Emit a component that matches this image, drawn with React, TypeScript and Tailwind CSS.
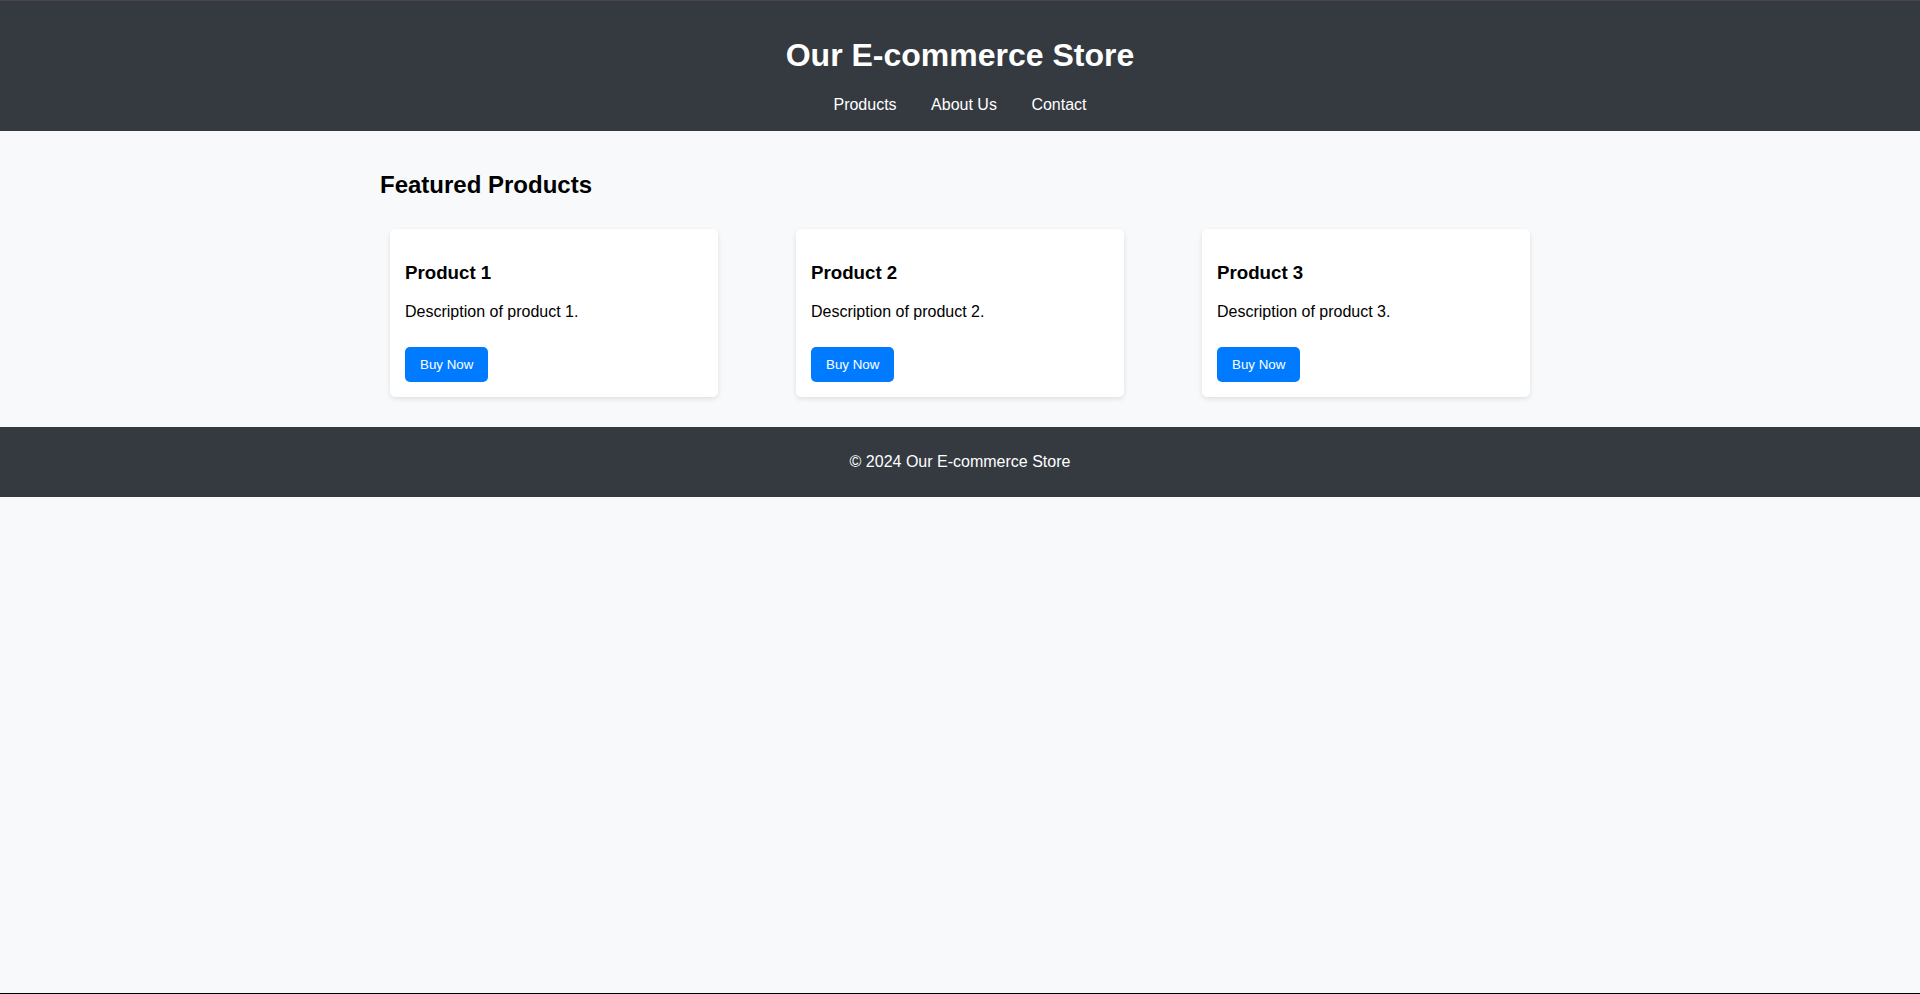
export default function App() {
  const products = [1, 2, 3];
  return (
    <div
      className="min-h-[994px] bg-[#f8f9fa] text-black border-b border-black flex flex-col"
      style={{ fontFamily: '"Liberation Sans", Arial, sans-serif' }}
    >
      <header className="bg-[#343a40] text-white text-center pt-[15px] pb-[17px] border-t border-[#4b4444]">
        <h1 className="text-[32px] leading-[37px] font-bold mt-[21px] mb-[22px]">Our E-commerce Store</h1>
        <nav className="text-[16px] leading-[18px] flex justify-center gap-[34.5px]">
          <a className="text-white">Products</a>
          <a className="text-white">About Us</a>
          <a className="text-white">Contact</a>
        </nav>
      </header>
      <main className="w-[1200px] mx-auto px-[20px] pt-[20px] pb-[20px]">
        <h2 className="text-[24px] leading-[28px] font-bold my-[20px]">Featured Products</h2>
        <div className="flex justify-between">
          {products.map((n) => (
            <div
              key={n}
              className="w-[328px] m-[10px] bg-white rounded-[5px] shadow-[0_2px_5px_rgba(0,0,0,0.1)] p-[15px] flex flex-col items-start"
            >
              <h3 className="text-[18.72px] leading-[22px] font-bold mt-[18px] mb-[19px]">Product {n}</h3>
              <p className="text-[16px] leading-[18px] mb-[16px]">Description of product {n}.</p>
              <button className="mt-[10px] bg-[#007bff] text-white text-[13.33px] leading-[15px] font-normal px-[15px] py-[10px] rounded-[5px]">
                Buy Now
              </button>
            </div>
          ))}
        </div>
      </main>
      <footer className="bg-[#343a40] text-white text-center py-[10px]">
        <p className="text-[16px] leading-[18px] my-[16px]">© 2024 Our E-commerce Store</p>
      </footer>
    </div>
  );
}
